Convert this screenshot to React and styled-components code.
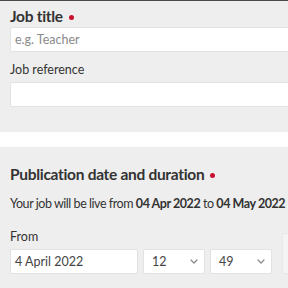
import React from 'react';
import styled, { createGlobalStyle } from 'styled-components';

const GlobalStyle = createGlobalStyle`
  html, body {
    margin: 0;
    padding: 0;
    background: #ffffff;
    overflow: hidden;
  }
  body {
    font-family: Lato, "Open Sans", sans-serif;
    color: #333333;
  }
`;

const Page = styled.div`
  width: 340px;
  border-top: 1px solid #4a4a4a;
`;

const Section = styled.section`
  background: #eeeeee;
  padding: ${(p) => p.$pad};
`;

const Gap = styled.div`
  height: 15px;
  background: #ffffff;
`;

const Heading = styled.h2`
  margin: 0 0 ${(p) => p.$mb || '0'};
  font-size: 15.5px;
  line-height: 20px;
  font-weight: 700;
  letter-spacing: -0.3px;
  color: #333333;
  display: flex;
  align-items: center;
  gap: 6px;
`;

const Required = styled.span`
  width: 5px;
  height: 5px;
  border-radius: 50%;
  background: #c8102e;
  margin-top: 2px;
`;

const Label = styled.label`
  display: block;
  font-size: 12.5px;
  line-height: 16px;
  color: #333333;
  margin: ${(p) => p.$margin || '0'};
`;

const TextInput = styled.div`
  box-sizing: border-box;
  height: 25px;
  width: ${(p) => p.$width || '320px'};
  background: #ffffff;
  border: 1px solid #e2e2e2;
  border-radius: 2px;
  padding: 0 4px;
  display: flex;
  align-items: center;
  font-size: 12.5px;
  color: ${(p) => (p.$placeholder ? '#8a8a8a' : '#444444')};
`;

const Intro = styled.p`
  margin: 12px 0 0;
  font-size: 12.5px;
  line-height: 16px;
  letter-spacing: -0.45px;
  color: #333333;
  white-space: nowrap;
  b {
    font-weight: 700;
  }
`;

const DateRow = styled.div`
  display: flex;
  align-items: flex-end;
  gap: 10px;
  margin-top: 17px;
`;

const Row = styled.div`
  display: flex;
  gap: 5px;
  margin-top: 4px;
`;

const Select = styled(TextInput)`
  justify-content: space-between;
  padding: 0 6px 0 8px;
`;

const Faded = styled.div`
  width: 40px;
  height: 41px;
  background: #f4f4f4;
  border: 1px solid #e8e8e8;
  box-sizing: border-box;
`;

const Chevron = () => (
  <svg width="8" height="5" viewBox="0 0 8 5" fill="none">
    <path d="M1 1l3 3 3-3" stroke="#888" strokeWidth="1.2" strokeLinecap="round" strokeLinejoin="round" />
  </svg>
);

export default function App() {
  return (
    <>
      <GlobalStyle />
      <Page>
        <Section $pad="5px 0 25px 10px">
          <Heading $mb="1px">
            <span>Job title</span>
            <Required />
          </Heading>
          <TextInput $placeholder>e.g. Teacher</TextInput>
          <Label $margin="10px 0 4px">Job reference</Label>
          <TextInput />
        </Section>
        <Gap />
        <Section $pad="17px 0 20px 10px">
          <Heading>
            <span>Publication date and duration</span>
            <Required />
          </Heading>
          <Intro>
            Your job will be live from <b>04 Apr 2022</b> to <b>04 May 2022</b>
          </Intro>
          <DateRow>
            <div>
              <Label>From</Label>
              <Row>
                <TextInput $width="128px">4 April 2022</TextInput>
                <Select $width="62px">
                  12 <Chevron />
                </Select>
                <Select $width="62px">
                  49 <Chevron />
                </Select>
              </Row>
            </div>
            <Faded />
          </DateRow>
        </Section>
      </Page>
    </>
  );
}
